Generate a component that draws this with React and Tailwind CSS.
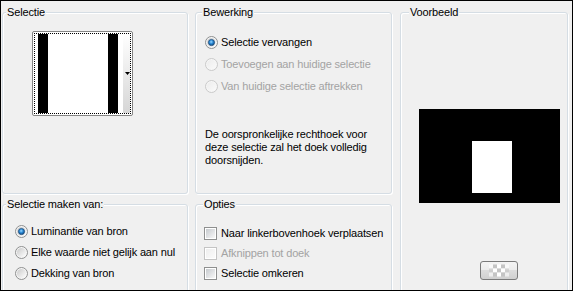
import React from "react";

const Radio = ({ checked = false, disabled = false }) => {
  const id = disabled ? "rg-off" : "rg-on";
  return (
    <svg width="13" height="13" viewBox="0 0 13 13" className="shrink-0">
      <defs>
        <linearGradient id={id} x1="0" y1="0" x2="1" y2="1">
          <stop offset="0" stopColor={disabled ? "#ececec" : "#c9c9c9"} />
          <stop offset="1" stopColor={disabled ? "#fafafa" : "#ffffff"} />
        </linearGradient>
        <radialGradient id="rg-dot" cx="0.45" cy="0.4" r="0.65">
          <stop offset="0" stopColor="#9ad8ff" />
          <stop offset="0.45" stopColor="#2b8ad6" />
          <stop offset="1" stopColor="#0b3d70" />
        </radialGradient>
      </defs>
      <circle cx="6.5" cy="6.5" r="6" fill="#f6f6f6" stroke={disabled ? "#c9c9c9" : "#8e8f8f"} />
      <circle cx="6.5" cy="6.5" r="4.6" fill={`url(#${id})`} />
      {checked && <circle cx="6.5" cy="6.5" r="3.1" fill="url(#rg-dot)" stroke="#1b4b7a" strokeWidth="0.7" />}
    </svg>
  );
};

const Check = ({ disabled = false }) => {
  const id = disabled ? "cb-off" : "cb-on";
  return (
    <svg width="13" height="13" viewBox="0 0 13 13" className="shrink-0">
      <defs>
        <linearGradient id={id} x1="0" y1="0" x2="1" y2="1">
          <stop offset="0" stopColor={disabled ? "#eeeeee" : "#c6cace"} />
          <stop offset="1" stopColor={disabled ? "#fbfbfb" : "#f8f8f8"} />
        </linearGradient>
      </defs>
      <rect x="0.5" y="0.5" width="12" height="12" fill="#ffffff" stroke={disabled ? "#c4c4c4" : "#8e8f8f"} />
      <rect x="2" y="2" width="9" height="9" fill={`url(#${id})`} />
    </svg>
  );
};

const Group = ({ label, lm, className = "", children }) => (
  <fieldset
    className={`rounded-[3px] border border-[#d5dde4] shadow-[inset_1px_1px_0_#fff,1px_1px_0_#fff] ${className}`}
  >
    <legend className={`${lm} bg-[#f0f0f0] px-[1px] text-[11px] leading-[13px]`}>{label}</legend>
    {children}
  </fieldset>
);

const RadioRow = ({ label, checked, disabled, h }) => (
  <div className={`flex items-center gap-[3px] ${h} ${disabled ? "text-[#a3a3a3]" : ""}`}>
    <Radio checked={checked} disabled={disabled} />
    <span className="whitespace-nowrap">{label}</span>
  </div>
);

const CheckRow = ({ label, disabled }) => (
  <div className={`flex h-[20px] items-center gap-[4px] ${disabled ? "text-[#a3a3a3]" : ""}`}>
    <Check disabled={disabled} />
    <span className="whitespace-nowrap">{label}</span>
  </div>
);

const Thumbnail = () => (
  <div className="ml-[29px] mt-[12px] h-[85px] w-[101px] rounded-[2px] border border-[#858585] bg-white p-[1px]">
    <div className="flex h-full border border-dotted border-black">
      <div className="w-[3px]" />
      <div className="w-[10px] bg-black" />
      <div className="w-[60px]" />
      <div className="w-[10px] bg-black" />
      <div className="w-[5px]" />
      <div className="flex w-[7px] items-center justify-end bg-[linear-gradient(#ffffff,#d6d6d6)]">
        <svg width="5" height="3" viewBox="0 0 5 3">
          <path d="M0 0h5L2.5 3z" fill="#000" />
        </svg>
      </div>
    </div>
  </div>
);

const CheckerButton = () => (
  <div className="ml-[79px] mt-[58px] flex h-[19px] w-[38px] items-center justify-center rounded-[3px] border border-[#7a7a7a] bg-[linear-gradient(#f4f4f4_0%,#ececec_45%,#dcdcdc_50%,#d0d0d0_100%)]">
    <svg width="20" height="13" viewBox="0 0 20 13">
      {[0, 1, 2].map((r) =>
        [0, 1, 2, 3, 4].map((c) => (
          <rect
            key={`${r}-${c}`}
            x={c * 4}
            y={r * 4 + 0.5}
            width="4"
            height="4"
            fill={(r + c) % 2 === 0 ? "#ffffff" : "#c4c4c4"}
            opacity={c === 0 || c === 4 ? 0.6 : 1}
          />
        ))
      )}
    </svg>
  </div>
);

export default function App() {
  return (
    <div className="h-[292px] w-[575px] bg-white">
      <div className="h-[291px] w-[573px] overflow-hidden border border-black bg-[#f0f0f0] font-['Liberation_Sans',Arial,sans-serif] text-[11px] leading-[13px] tracking-[-0.15px] text-black">
        <div className="flex pl-[1px] pt-[5px]">
          <div className="flex w-[186px] flex-col gap-[4px]">
            <Group label="Selectie" lm="ml-[3px]" className="h-[188px]">
              <Thumbnail />
            </Group>
            <Group label="Selectie maken van:" lm="ml-[3px]" className="h-[110px]">
              <div className="mt-[10px] pl-[12px]">
                <RadioRow label="Luminantie van bron" checked h="h-[21px]" />
                <RadioRow label="Elke waarde niet gelijk aan nul" h="h-[21px]" />
                <RadioRow label="Dekking van bron" h="h-[21px]" />
              </div>
            </Group>
          </div>

          <div className="ml-[7px] flex w-[197px] flex-col gap-[4px]">
            <Group label="Bewerking" lm="ml-[6px]" className="h-[188px]">
              <div className="mt-[12px] pl-[9px]">
                <RadioRow label="Selectie vervangen" checked h="h-[22px]" />
                <RadioRow label="Toevoegen aan huidige selectie" disabled h="h-[22px]" />
                <RadioRow label="Van huidige selectie aftrekken" disabled h="h-[22px]" />
              </div>
              <p className="mt-[31px] pl-[9px]">
                De oorspronkelijke rechthoek voor
                <br />
                deze selectie zal het doek volledig
                <br />
                doorsnijden.
              </p>
            </Group>
            <Group label="Opties" lm="ml-[7px]" className="h-[110px]">
              <div className="mt-[12px] pl-[8px]">
                <CheckRow label="Naar linkerbovenhoek verplaatsen" />
                <CheckRow label="Afknippen tot doek" disabled />
                <CheckRow label="Selectie omkeren" />
              </div>
            </Group>
          </div>

          <div className="ml-[8px] w-[168px]">
            <Group label="Voorbeeld" lm="ml-[8px]" className="h-[300px]">
              <div className="ml-[18px] mt-[90px] h-[94px] w-[141px] bg-black pl-[53px] pt-[32px]">
                <div className="h-[52px] w-[40px] bg-white" />
              </div>
              <CheckerButton />
            </Group>
          </div>
        </div>
      </div>
    </div>
  );
}
